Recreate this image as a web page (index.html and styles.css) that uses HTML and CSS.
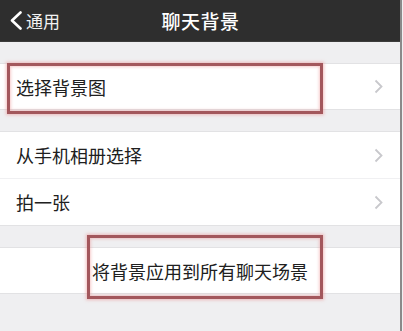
FILE: index.html
```html
<!DOCTYPE html>
<html lang="zh">
<head>
<meta charset="utf-8">
<link rel="stylesheet" href="styles.css">
</head>
<body>
<div class="page">
  <header class="nav">
    <div class="back">
      <svg class="back-icon" width="14" height="19" viewBox="0 0 14 19"><path d="M11.5 1.5 L3 9.5 L11.5 17.5" fill="none" stroke="#fff" stroke-width="2.6" stroke-linecap="round" stroke-linejoin="round"/></svg>
      <span>通用</span>
    </div>
    <div class="title">聊天背景</div>
  </header>

  <section class="group">
    <div class="cell">
      <span class="label">选择背景图</span>
      <svg class="chev" width="9" height="15" viewBox="0 0 9 15"><path d="M1.5 1.5 L7.5 7.5 L1.5 13.5" fill="none" stroke="#c8c8cc" stroke-width="1.8"/></svg>
    </div>
    <div class="mark mark-first"></div>
  </section>

  <section class="group group-two">
    <div class="cell">
      <span class="label">从手机相册选择</span>
      <svg class="chev" width="9" height="15" viewBox="0 0 9 15"><path d="M1.5 1.5 L7.5 7.5 L1.5 13.5" fill="none" stroke="#c8c8cc" stroke-width="1.8"/></svg>
    </div>
    <div class="cell cell-sep">
      <span class="label">拍一张</span>
      <svg class="chev" width="9" height="15" viewBox="0 0 9 15"><path d="M1.5 1.5 L7.5 7.5 L1.5 13.5" fill="none" stroke="#c8c8cc" stroke-width="1.8"/></svg>
    </div>
  </section>

  <section class="group">
    <div class="cell cell-center">
      <span class="label">将背景应用到所有聊天场景</span>
    </div>
    <div class="mark mark-apply"></div>
  </section>
</div>
</body>
</html>
```

FILE: styles.css
```css
html, body {
  margin: 0;
  padding: 0;
  background: #efeff1;
}
body {
  font-family: "Noto Sans CJK SC", "Noto Sans", sans-serif;
  width: 403px;
  height: 331px;
  overflow: hidden;
}
.page {
  width: 400px;
  height: 331px;
  border-right: 2px solid #8a8a8a;
  background: #efeff1;
}
.nav {
  position: relative;
  height: 41px;
  background: #2e2e2e;
  border-bottom: 1px solid #3c3c3c;
  display: flex;
  align-items: center;
  justify-content: center;
}
.back {
  position: absolute;
  left: 9px;
  top: 0;
  height: 41px;
  display: flex;
  align-items: center;
  gap: 3px;
  color: #f2f2f2;
  font-size: 17px;
  font-weight: 400;
}
.back-icon {
  display: block;
}
.title {
  color: #ffffff;
  font-size: 19px;
  font-weight: 500;
  letter-spacing: 0.5px;
  margin-left: 1px;
}
.group {
  position: relative;
  margin-top: 21px;
  background: #ffffff;
  border-top: 1px solid #e2e2e4;
  border-bottom: 1px solid #e2e2e4;
}
.cell {
  height: 45px;
  display: flex;
  align-items: center;
  justify-content: space-between;
  padding: 0 16px 0 16px;
  font-size: 18px;
  color: #202020;
}
.group-two .cell {
  height: 46px;
}
.group-two .cell-sep {
  border-top: 1px solid #f0f0f2;
  height: 46px;
}
.cell-center {
  justify-content: center;
  padding: 0;
}
.chev {
  display: block;
  margin-right: 1px;
}
.mark {
  position: absolute;
  border: 3px solid #a3575c;
  box-shadow: 0 0 3px 1px rgba(235, 140, 140, 0.55), inset 0 0 3px 1px rgba(235, 140, 140, 0.45);
}
.mark-first {
  left: 7px;
  top: -1px;
  width: 310px;
  height: 45px;
}
.mark-apply {
  left: 87px;
  top: -13px;
  width: 230px;
  height: 58px;
}
```
